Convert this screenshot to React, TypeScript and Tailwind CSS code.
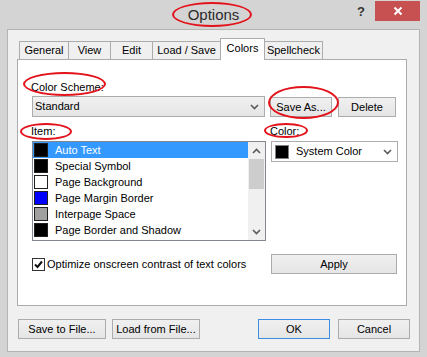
import React from "react";

const font = { fontFamily: '"Liberation Sans", Arial, sans-serif' };

function Chevron({ up = false }: { up?: boolean }) {
  return (
    <svg width="9" height="6" viewBox="0 0 9 6" className="shrink-0">
      <path
        d={up ? "M1 5 L4.5 1.5 L8 5" : "M1 1 L4.5 4.5 L8 1"}
        fill="none"
        stroke="#5a5a5a"
        strokeWidth="1.6"
      />
    </svg>
  );
}

function Btn({ label, w, blue = false, className = "" }: { label: string; w: string; blue?: boolean; className?: string }) {
  return (
    <div
      className={`${w} h-[20px] flex items-center justify-center border ${blue ? "border-[#3c8fe0]" : "border-[#acacac]"} bg-linear-to-b from-[#f0f0f0] to-[#e5e5e5] text-black ${className}`}
    >
      {label}
    </div>
  );
}

function Ellipse({ c }: { c: string }) {
  return <div className={`absolute border-2 border-[#e3131b] rounded-[50%] pointer-events-none ${c}`} />;
}

const tabs = [
  { name: "General", w: "w-[50px]" },
  { name: "View", w: "w-[43px]" },
  { name: "Edit", w: "w-[43px]" },
  { name: "Load / Save", w: "w-[69px]" },
  { name: "Colors", w: "w-[45px]", active: true },
  { name: "Spellcheck", w: "w-[59px]" },
];

const items = [
  { name: "Auto Text", color: "bg-black", sel: true },
  { name: "Special Symbol", color: "bg-black" },
  { name: "Page Background", color: "bg-white" },
  { name: "Page Margin Border", color: "bg-[#0000ff]" },
  { name: "Interpage Space", color: "bg-[#a0a0a0]" },
  { name: "Page Border and Shadow", color: "bg-black" },
];

export default function App() {
  return (
    <div className="relative w-[427px] h-[357px] bg-[#d4d4d4] overflow-hidden text-[11px] text-black" style={font}>
      {/* title bar */}
      <div className="h-[29px] grid grid-cols-[1fr_auto_1fr]">
        <div />
        <div className="pt-[6px] text-[15px] leading-[17px] text-[#2b2b2b]">Options</div>
        <div className="flex items-start justify-end">
          <div className="mt-[5px] mr-[10px] text-[13px] font-bold leading-[14px] text-[#333]">?</div>
          <div className="w-[45px] h-[20px] mt-px mr-[7px] bg-[#c75050] flex items-center justify-center">
            <svg width="10" height="10" viewBox="0 0 10 10">
              <path d="M1.5 1.5 L8.5 8.5 M8.5 1.5 L1.5 8.5" stroke="white" strokeWidth="2" />
            </svg>
          </div>
        </div>
      </div>

      {/* client area */}
      <div className="ml-[7px] w-[413px] h-[323px] border border-[#b4b4b4] bg-[#f0f0f0]">
        <div className="ml-[11px] mt-[8px] h-[21px] flex items-end">
          {tabs.map((t) =>
            t.active ? (
              <div
                key={t.name}
                className={`${t.w} h-[22px] -mb-px -ml-px relative z-10 border border-b-0 border-[#acacac] bg-white flex items-center justify-center pb-[2px]`}
              >
                {t.name}
              </div>
            ) : (
              <div
                key={t.name}
                className={`${t.w} h-[18px] -ml-px first:ml-0 border border-b-0 border-[#acacac] bg-[#f0f0f0] flex items-center justify-center`}
              >
                {t.name}
              </div>
            )
          )}
        </div>

        {/* tab panel */}
        <div className="ml-[9px] w-[390px] h-[247px] border border-[#acacac] bg-white pl-[14px]">
          <div className="mt-[21px] h-[13px] leading-[13px] -ml-px">Color Scheme:</div>
          <div className="mt-[2px] flex items-start">
            <div className="w-[233px] h-[21px] border border-[#acacac] bg-linear-to-b from-[#f0f0f0] to-[#e5e5e5] flex items-center pl-[2px] pr-[5px] justify-between">
              <span>Standard</span>
              <Chevron />
            </div>
            <Btn label="Save As..." w="w-[62px]" className="ml-[5px] mt-px" />
            <Btn label="Delete" w="w-[58px]" className="ml-[6px] mt-px" />
          </div>

          <div className="mt-[8px] h-[13px] leading-[13px] flex">
            <div className="w-[239px] -ml-px">Item:</div>
            <div>Color:</div>
          </div>

          <div className="mt-[3px] flex items-start">
            <div className="w-[234px] h-[100px] border border-[#828790] flex">
              <div className="flex-1 flex flex-col">
                {items.map((it) => (
                  <div
                    key={it.name}
                    className={`h-[16px] flex items-center pl-px ${it.sel ? "bg-[#3399ff] text-white" : ""}`}
                  >
                    <div className={`w-[14px] h-[14px] border border-[#202020] ${it.color}`} />
                    <span className="ml-[7px]">{it.name}</span>
                  </div>
                ))}
              </div>
              <div className="w-[17px] bg-[#f0f0f0] flex flex-col items-center">
                <div className="h-[17px] flex items-center justify-center">
                  <Chevron up />
                </div>
                <div className="w-[15px] h-[30px] bg-[#cdcdcd]" />
                <div className="flex-1" />
                <div className="h-[17px] flex items-center justify-center">
                  <Chevron />
                </div>
              </div>
            </div>
            <div className="ml-[5px] w-[127px] h-[21px] border border-[#acacac] bg-white flex items-center pl-[3px] pr-[5px]">
              <div className="w-[14px] h-[14px] bg-black border border-[#808080]" />
              <span className="ml-[7px] flex-1">System Color</span>
              <Chevron />
            </div>
          </div>

          <div className="mt-[13px] flex items-center">
            <div className="w-[239px] flex items-center">
              <div className="w-[13px] h-[13px] border border-[#333] bg-white flex items-center justify-center">
                <svg width="11" height="11" viewBox="0 0 11 11">
                  <path d="M2 5.5 L4.5 8 L9 2.5" fill="none" stroke="#111" strokeWidth="2" />
                </svg>
              </div>
              <span className="ml-[2px]">Optimize onscreen contrast of text colors</span>
            </div>
            <Btn label="Apply" w="w-[126px]" />
          </div>
        </div>

        {/* bottom buttons */}
        <div className="mt-[13px] pl-[10px] flex">
          <Btn label="Save to File..." w="w-[88px]" />
          <Btn label="Load from File..." w="w-[88px]" className="ml-[6px]" />
          <Btn label="OK" w="w-[72px]" blue className="ml-[58px]" />
          <Btn label="Cancel" w="w-[72px]" className="ml-[8px]" />
        </div>
      </div>

      {/* annotation ellipses */}
      <Ellipse c="left-[172px] top-[2px] w-[80px] h-[25px]" />
      <Ellipse c="left-[222px] top-[39px] w-[40px] h-[21px]" />
      <Ellipse c="left-[23px] top-[72px] w-[83px] h-[24px]" />
      <Ellipse c="left-[268px] top-[86px] w-[71px] h-[33px]" />
      <Ellipse c="left-[20px] top-[123px] w-[52px] h-[17px]" />
      <Ellipse c="left-[264px] top-[123px] w-[44px] h-[15px]" />
    </div>
  );
}
